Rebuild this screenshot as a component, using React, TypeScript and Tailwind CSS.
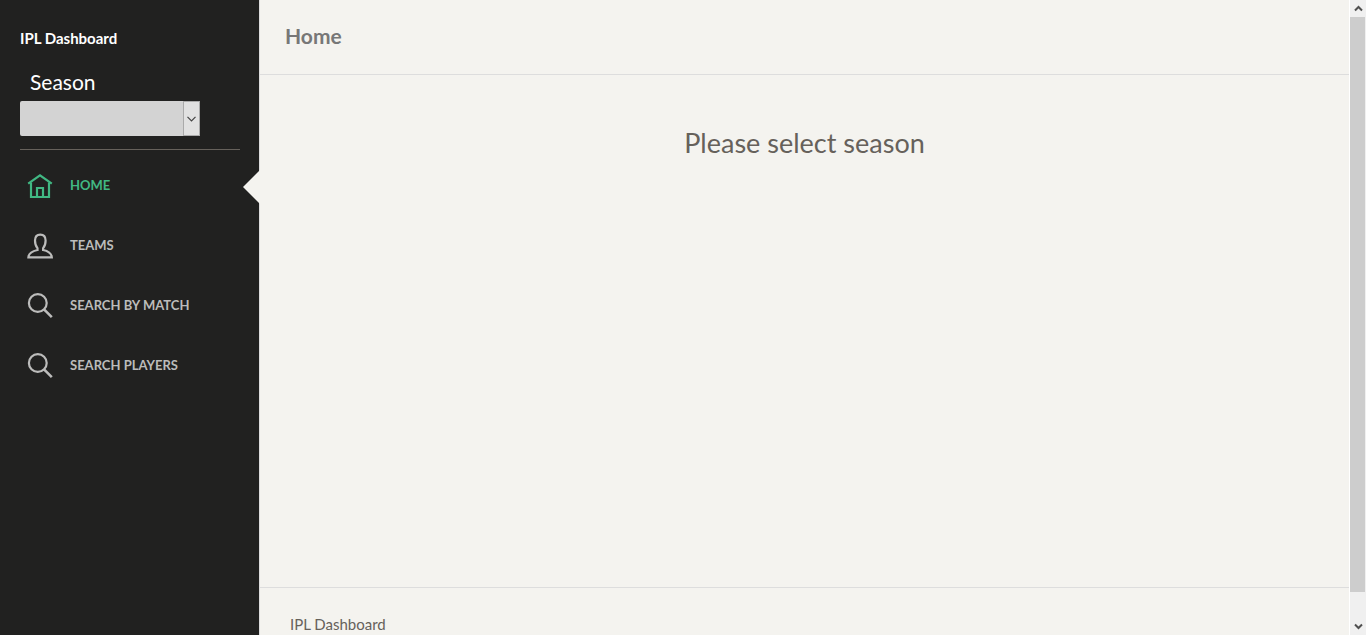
import React from "react";

const iconProps = {
  width: 26,
  height: 26,
  viewBox: "0 0 26 26",
  fill: "none",
  stroke: "currentColor",
  strokeWidth: 2.2,
  "aria-hidden": true,
} as const;

function HomeIcon() {
  return (
    <svg {...iconProps}>
      <path d="M1.2 10.6 13 2.4l11.8 8.2" />
      <path d="M4 9.500V24h18V9.500" />
      <path d="M10 24v-9h6v9" />
    </svg>
  );
}

function UserIcon() {
  return (
    <svg {...iconProps}>
      <path d="M10.500 15.200C8.800 13.400 8 10.600 8 7.600c0-4 2-6 5.300-6s5.300 2 5.300 6c0 3-.8 5.800-2.500 7.600v1.800c4.600 1 8.400 2.700 8.700 7.300H1.400c.3-4.600 4.500-6.300 9.100-7.300z" />
    </svg>
  );
}

function SearchIcon() {
  return (
    <svg {...iconProps}>
      <circle cx="10.800" cy="10" r="8.900" />
      <path d="m17 16.400 7.800 7.800" strokeWidth="2.600" />
    </svg>
  );
}

const links = [
  { label: "HOME", Icon: HomeIcon, active: true },
  { label: "TEAMS", Icon: UserIcon, active: false },
  { label: "SEARCH BY MATCH", Icon: SearchIcon, active: false },
  { label: "SEARCH PLAYERS", Icon: SearchIcon, active: false },
];

function Chevron({ up = false }: { up?: boolean }) {
  return (
    <svg width="9" height="7" viewBox="0 0 9 7" fill="none" stroke="#505050" strokeWidth="2" aria-hidden="true">
      <path d={up ? "M1 5.500 4.500 2 8 5.500" : "M1 1.500 4.500 5 8 1.500"} />
    </svg>
  );
}

function Sidebar() {
  return (
    <aside className="w-[260px] shrink-0 border-r border-[#dddddd] bg-[#212120] text-white">
      <div className="mr-[19px] ml-5 border-b border-[#66615b] pt-7 pb-[13px]">
        <a href="#" className="block text-[15px] leading-5 font-bold">
          IPL Dashboard
        </a>
        <label htmlFor="season" className="mt-5 block pl-2.5 text-[21px] leading-7">
          Season
        </label>
        <div className="relative mt-[5px] h-[35px] w-[180px]">
          <select
            id="season"
            defaultValue=""
            className="h-full w-full appearance-none rounded-xs bg-[#d3d3d3] px-2 text-sm text-black"
          >
            <option value=""></option>
          </select>
          <span className="pointer-events-none absolute inset-y-0 right-0 flex w-[17px] items-center justify-center border border-[#aaaaaa] bg-[#e1e1e1]">
            <svg width="9" height="6" viewBox="0 0 9 6" fill="none" stroke="#444444" strokeWidth="1.2" aria-hidden="true">
              <path d="m.5 .8 4 4 4-4" />
            </svg>
          </span>
        </div>
      </div>
      <nav className="pt-1.5">
        {links.map(({ label, Icon, active }) => (
          <a
            key={label}
            href="#"
            aria-current={active ? "page" : undefined}
            className={`relative flex h-[60px] items-center gap-[17px] pl-[27px] text-[13px] font-bold ${
              active ? "text-[#41b883]" : "text-[#bcbcbb]"
            }`}
          >
            <Icon />
            <span>{label}</span>
            {active && (
              <span className="absolute top-3.5 -right-px border-y-[17px] border-r-[17px] border-y-transparent border-r-[#f4f3ef]" />
            )}
          </a>
        ))}
      </nav>
    </aside>
  );
}

export default function App() {
  return (
    <div className="flex h-screen overflow-hidden bg-[#f4f3ef] font-['Lato',sans-serif] text-[#66615b]">
      <Sidebar />
      <div className="flex min-w-0 flex-1 flex-col">
        <header className="border-b border-[#dddddd] px-[25px] pt-[22px] pb-6">
          <h1 className="text-[21px] leading-7 font-bold text-[#777777]">Home</h1>
        </header>
        <main className="flex-1 px-4 pt-12 text-center">
          <h2 className="text-[27px] leading-10">Please select season</h2>
        </main>
        <footer className="h-12 shrink-0 overflow-hidden border-t border-[#dddddd] px-[30px] pt-[26px]">
          <a href="#" className="block text-[15px] leading-5">
            IPL Dashboard
          </a>
        </footer>
      </div>
      <div aria-hidden="true" className="flex w-[17px] shrink-0 flex-col border-l border-white bg-[#f0f0f0]">
        <span className="flex h-[17px] items-center justify-center">
          <Chevron up />
        </span>
        <span className="mr-px flex-1 bg-[#cdcdcd]" />
        <span className="flex h-[43px] items-end justify-center pb-[5px]">
          <Chevron />
        </span>
      </div>
    </div>
  );
}
